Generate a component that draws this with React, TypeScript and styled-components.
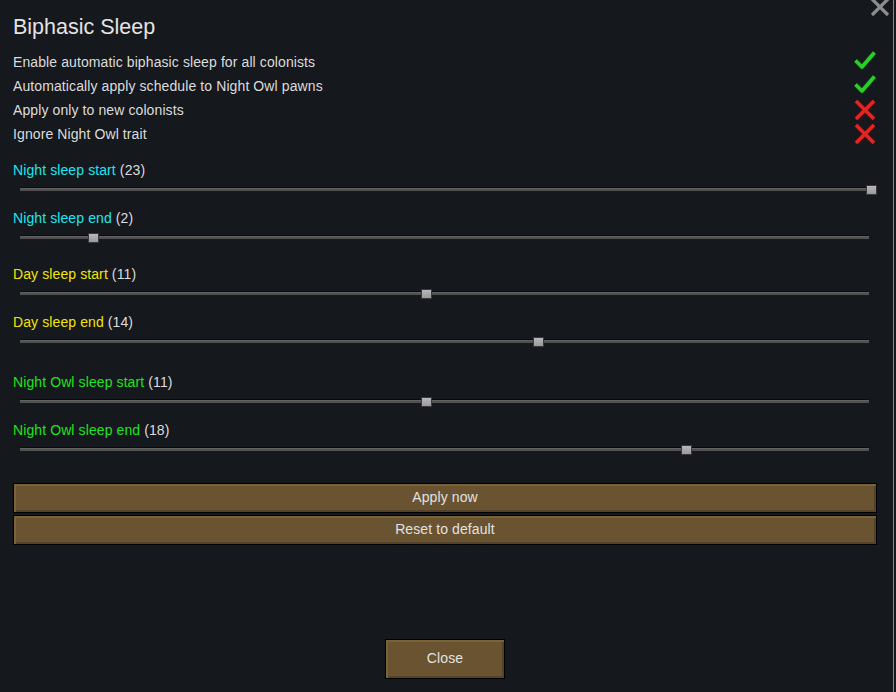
import React from 'react'
import styled, { createGlobalStyle } from 'styled-components'

const GlobalStyle = createGlobalStyle`
  html, body {
    margin: 0;
    padding: 0;
    background: #15181d;
  }
  body {
    font-family: 'Liberation Sans', Arial, sans-serif;
  }
`

const Window = styled.div`
  position: relative;
  box-sizing: border-box;
  width: 896px;
  height: 692px;
  background: #15181d;
  border-right: 2px solid #15181d;
  box-shadow: inset -1px 0 0 #7b8794;
  padding: 15px 17px 13px 13px;
  display: flex;
  flex-direction: column;
  overflow: hidden;
`

const CloseX = styled.div`
  position: absolute;
  top: -3px;
  right: 4px;
  width: 20px;
  height: 20px;
`

const Title = styled.h1`
  margin: 0 0 11px 0;
  font-size: 21.5px;
  font-weight: 400;
  line-height: 24px;
  color: #e4e4e4;
`

const CheckRow = styled.div`
  display: flex;
  align-items: center;
  justify-content: space-between;
  height: 24px;
  font-size: 14px;
  letter-spacing: 0.1px;
  color: #dcdcdc;
`

const IconBox = styled.div`
  width: 24px;
  height: 24px;
  display: flex;
  align-items: center;
  justify-content: center;
`

const Group = styled.div<{ $gap: number }>`
  margin-top: ${({ $gap }) => $gap}px;
  display: flex;
  flex-direction: column;
`

const SliderLabel = styled.div`
  height: 24px;
  line-height: 24px;
  font-size: 14px;
  letter-spacing: 0.1px;
  color: #dcdcdc;
`

const Accent = styled.span<{ $color: string }>`
  color: ${({ $color }) => $color};
`

const SliderArea = styled.div`
  position: relative;
  height: 24px;
`

const Track = styled.div`
  position: absolute;
  top: 5px;
  left: 7px;
  right: 8px;
  height: 5px;
  box-sizing: border-box;
  background: linear-gradient(#0a0a0a 0 1px, #626262 1px 2px, #505050 2px 4px, #1a1a1a 4px);
  border-radius: 1px;
`

const Thumb = styled.div`
  position: absolute;
  top: 3px;
  width: 11px;
  height: 10px;
  box-sizing: border-box;
  background: linear-gradient(#b8b8b8, #9a9a9a);
  border: 1px solid #3a3a3a;
`

const ButtonStack = styled.div`
  margin-top: 17px;
  display: flex;
  flex-direction: column;
  gap: 2px;
`

const WoodButton = styled.button<{ $width?: number; $height: number }>`
  box-sizing: border-box;
  width: ${({ $width }) => ($width ? `${$width}px` : '100%')};
  height: ${({ $height }) => $height}px;
  border: 1px solid #000;
  padding: 0 0 2px 0;
  background: #695331;
  box-shadow:
    inset 2px 2px 0 #7b6339,
    inset -2px -2px 0 #54432a;
  font-family: 'Liberation Sans', Arial, sans-serif;
  font-size: 14px;
  letter-spacing: 0.1px;
  color: #e2e2e2;
  cursor: pointer;
`

const Footer = styled.div`
  margin-top: auto;
  display: flex;
  justify-content: center;
`

const Check = () => (
  <svg width="24" height="24" viewBox="0 0 24 24">
    <path d="M2.5 10.5 L9 17 L21.5 2.5" fill="none" stroke="#0f3a0f" strokeWidth="5.5" strokeLinejoin="round" />
    <path d="M2.5 10.5 L9 17 L21.5 2.5" fill="none" stroke="#2ad02a" strokeWidth="3.5" strokeLinejoin="round" />
  </svg>
)

const Cross = () => (
  <svg width="24" height="24" viewBox="0 0 24 24">
    <path d="M3 3 L21 21 M21 3 L3 21" fill="none" stroke="#4a0d0d" strokeWidth="5.5" />
    <path d="M3 3 L21 21 M21 3 L3 21" fill="none" stroke="#e02626" strokeWidth="3.5" />
  </svg>
)

const MAX = 23
const TRACK_SPAN = 852

type SliderDef = { label: string; value: number }

const Slider = ({ label, value, color }: SliderDef & { color: string }) => (
  <>
    <SliderLabel>
      <Accent $color={color}>{label}</Accent> ({value})
    </SliderLabel>
    <SliderArea>
      <Track />
      <Thumb style={{ left: 1 + (value / MAX) * TRACK_SPAN }} />
    </SliderArea>
  </>
)

const toggles = [
  { text: 'Enable automatic biphasic sleep for all colonists', on: true },
  { text: 'Automatically apply schedule to Night Owl pawns', on: true },
  { text: 'Apply only to new colonists', on: false },
  { text: 'Ignore Night Owl trait', on: false },
]

const groups: { color: string; gap: number; sliders: SliderDef[] }[] = [
  {
    color: '#1ee6ee',
    gap: 12,
    sliders: [
      { label: 'Night sleep start', value: 23 },
      { label: 'Night sleep end', value: 2 },
    ],
  },
  {
    color: '#f2e40c',
    gap: 8,
    sliders: [
      { label: 'Day sleep start', value: 11 },
      { label: 'Day sleep end', value: 14 },
    ],
  },
  {
    color: '#1de41d',
    gap: 12,
    sliders: [
      { label: 'Night Owl sleep start', value: 11 },
      { label: 'Night Owl sleep end', value: 18 },
    ],
  },
]

export default function App() {
  return (
    <>
      <GlobalStyle />
      <Window>
        <CloseX>
          <svg width="20" height="20" viewBox="0 0 20 20">
            <path d="M2 2 L18 18 M18 2 L2 18" stroke="#8c8c8c" strokeWidth="3.2" />
          </svg>
        </CloseX>
        <Title>Biphasic Sleep</Title>
        {toggles.map((t) => (
          <CheckRow key={t.text}>
            <span>{t.text}</span>
            <IconBox>{t.on ? <Check /> : <Cross />}</IconBox>
          </CheckRow>
        ))}
        {groups.map((g) => (
          <Group key={g.color} $gap={g.gap}>
            {g.sliders.map((s) => (
              <Slider key={s.label} {...s} color={g.color} />
            ))}
          </Group>
        ))}
        <ButtonStack>
          <WoodButton $height={30}>Apply now</WoodButton>
          <WoodButton $height={30}>Reset to default</WoodButton>
        </ButtonStack>
        <Footer>
          <WoodButton $width={120} $height={40}>
            Close
          </WoodButton>
        </Footer>
      </Window>
    </>
  )
}
